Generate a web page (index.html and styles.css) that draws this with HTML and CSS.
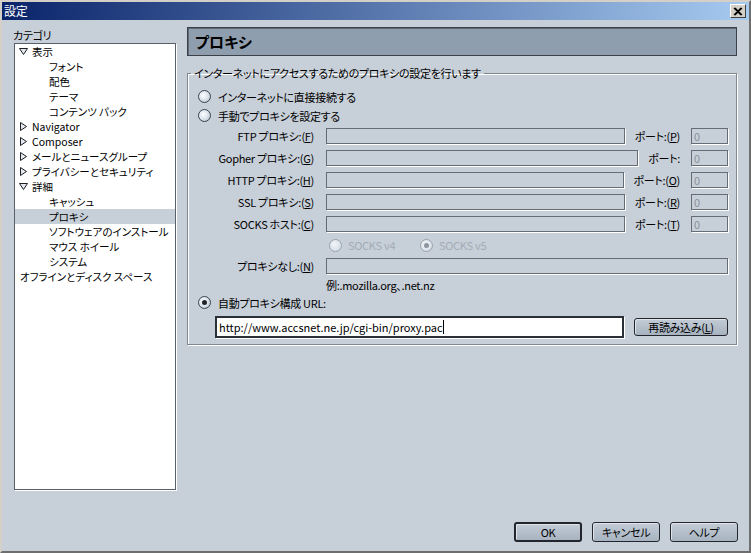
FILE: index.html
```html
<!DOCTYPE html>
<html lang="ja">
<head>
    <meta charset="UTF-8">
    <title>設定</title>
    <link rel="stylesheet" href="styles.css">
</head>
<body>
    <div class="window">
        <div class="titlebar">
            <span class="title">設定</span>
            <span class="close-btn">
                <svg width="10" height="9" viewBox="0 0 10 9"><path d="M1 1 L8 8 M2 1 L9 8 M8 1 L1 8 M9 1 L2 8" stroke="#000" stroke-width="1.2" fill="none"/></svg>
            </span>
        </div>

        <div class="content">
            <div class="sidebar">
                <div class="cat-label">カテゴリ</div>
                <ul class="tree">
                    <li class="lv1"><svg class="twisty" viewBox="0 0 9 9"><path d="M0.5 1.5 H8.5 L4.5 7.5 Z" fill="#e4e8ee" stroke="#1c1f24"/></svg>表示</li>
                    <li class="lv2">フォント</li>
                    <li class="lv2">配色</li>
                    <li class="lv2">テーマ</li>
                    <li class="lv2">コンテンツ パック</li>
                    <li class="lv1"><svg class="twisty" viewBox="0 0 9 9"><path d="M1.5 0.5 V8.5 L7.5 4.5 Z" fill="#e4e8ee" stroke="#1c1f24"/></svg>Navigator</li>
                    <li class="lv1"><svg class="twisty" viewBox="0 0 9 9"><path d="M1.5 0.5 V8.5 L7.5 4.5 Z" fill="#e4e8ee" stroke="#1c1f24"/></svg>Composer</li>
                    <li class="lv1"><svg class="twisty" viewBox="0 0 9 9"><path d="M1.5 0.5 V8.5 L7.5 4.5 Z" fill="#e4e8ee" stroke="#1c1f24"/></svg>メールとニュースグループ</li>
                    <li class="lv1"><svg class="twisty" viewBox="0 0 9 9"><path d="M1.5 0.5 V8.5 L7.5 4.5 Z" fill="#e4e8ee" stroke="#1c1f24"/></svg>プライバシーとセキュリティ</li>
                    <li class="lv1"><svg class="twisty" viewBox="0 0 9 9"><path d="M0.5 1.5 H8.5 L4.5 7.5 Z" fill="#e4e8ee" stroke="#1c1f24"/></svg>詳細</li>
                    <li class="lv2">キャッシュ</li>
                    <li class="lv2 selected">プロキシ</li>
                    <li class="lv2">ソフトウェアのインストール</li>
                    <li class="lv2">マウス ホイール</li>
                    <li class="lv2">システム</li>
                    <li class="lv0">オフラインとディスク スペース</li>
                </ul>
            </div>

            <div class="main">
                <div class="pane-title">プロキシ</div>

                <fieldset class="group">
                    <legend>インターネットにアクセスするためのプロキシの設定を行います</legend>

                    <div class="radio-row"><span class="radio"></span>インターネットに直接接続する</div>
                    <div class="radio-row"><span class="radio"></span>手動でプロキシを設定する</div>

                    <div class="proxy-row">
                        <span class="plabel">FTP プロキシ:(<u>F</u>)</span>
                        <span class="field"></span>
                        <span class="port-label">ポート:(<u>P</u>)</span>
                        <span class="port">0</span>
                    </div>
                    <div class="proxy-row">
                        <span class="plabel">Gopher プロキシ:(<u>G</u>)</span>
                        <span class="field"></span>
                        <span class="port-label">ポート:</span>
                        <span class="port">0</span>
                    </div>
                    <div class="proxy-row">
                        <span class="plabel">HTTP プロキシ:(<u>H</u>)</span>
                        <span class="field"></span>
                        <span class="port-label">ポート:(<u>O</u>)</span>
                        <span class="port">0</span>
                    </div>
                    <div class="proxy-row">
                        <span class="plabel">SSL プロキシ:(<u>S</u>)</span>
                        <span class="field"></span>
                        <span class="port-label">ポート:(<u>R</u>)</span>
                        <span class="port">0</span>
                    </div>
                    <div class="proxy-row">
                        <span class="plabel">SOCKS ホスト:(<u>C</u>)</span>
                        <span class="field"></span>
                        <span class="port-label">ポート:(<u>T</u>)</span>
                        <span class="port">0</span>
                    </div>

                    <div class="socks-row">
                        <span class="socks-opt"><span class="radio disabled"></span>SOCKS v4</span>
                        <span class="socks-opt"><span class="radio disabled checked"></span>SOCKS v5</span>
                    </div>

                    <div class="proxy-row noproxy">
                        <span class="plabel">プロキシなし:(<u>N</u>)</span>
                        <span class="field"></span>
                    </div>
                    <div class="example">例:.mozilla.org、.net.nz</div>

                    <div class="radio-row"><span class="radio checked"></span>自動プロキシ構成 URL:</div>

                    <div class="url-row">
                        <span class="url-field">http://www.accsnet.ne.jp/cgi-bin/proxy.pac<span class="caret"></span></span>
                        <button class="btn reload">再読み込み(<u>L</u>)</button>
                    </div>
                </fieldset>
            </div>
        </div>

        <div class="footer">
            <button class="btn default">OK</button>
            <button class="btn">キャンセル</button>
            <button class="btn">ヘルプ</button>
        </div>
    </div>
</body>
</html>
```

FILE: styles.css
```css
body {
    margin: 0;
    font-family: "Noto Sans CJK JP", sans-serif;
    font-size: 11px;
    letter-spacing: -0.3px;
    font-feature-settings: "palt";
    color: #000;
}
.window {
    width: 751px;
    height: 553px;
    box-sizing: border-box;
    display: flex;
    flex-direction: column;
    background: #c7cfd8;
    border-top: 2px solid #d4d0c8;
    border-left: 2px solid #d4d0c8;
    border-right: 2px solid #6e6e6e;
    border-bottom: 2px solid #6e6e6e;
}
.titlebar {
    height: 18px;
    display: flex;
    align-items: center;
    justify-content: space-between;
    padding: 0 3px 0 2px;
    background: linear-gradient(to right, #0a246a, #a6caf0);
}
.title {
    color: #fff;
    font-size: 12px;
    line-height: 18px;
}
.close-btn {
    width: 16px;
    height: 14px;
    box-sizing: border-box;
    display: flex;
    align-items: center;
    justify-content: center;
    background: #d4d0c8;
    border-top: 1px solid #fff;
    border-left: 1px solid #fff;
    border-right: 1px solid #404040;
    border-bottom: 1px solid #404040;
}
.content {
    display: flex;
    padding: 7px 0 0 11px;
}
.sidebar {
    width: 163px;
}
.cat-label {
    line-height: 16px;
}
.tree {
    list-style: none;
    margin: 0 0 0 1px;
    padding: 0;
    height: 447px;
    box-sizing: border-box;
    background: #fff;
    border: 1px solid #5a606b;
    box-shadow: 1px 1px 0 #fff;
    font-size: 10.5px;
    letter-spacing: 0;
}
.tree li {
    height: 15px;
    line-height: 15px;
    display: flex;
    align-items: center;
    white-space: nowrap;
}
.tree .lv0 { padding-left: 5px; }
.tree .lv1 { padding-left: 4px; }
.tree .lv2 { padding-left: 34px; }
.tree .selected { background: #c7cfd8; }
.twisty {
    width: 9px;
    height: 9px;
    margin-right: 4px;
}
.main {
    width: 550px;
    margin-left: 11px;
}
.pane-title {
    height: 29px;
    box-sizing: border-box;
    padding-left: 7px;
    display: flex;
    align-items: center;
    font-size: 15px;
    font-weight: bold;
    letter-spacing: 0;
    background: #8e9eae;
    border: 1px solid #3c4149;
    box-shadow: inset 1px 1px 0 #606975;
}
.group {
    margin: 10px 0 0 0;
    padding: 7px 8px 6px 10px;
    min-width: 0;
    height: 279px;
    box-sizing: border-box;
    border: 1px solid #7f8791;
    box-shadow: inset 1px 1px 0 #fff, 1px 1px 0 #fff;
}
.group legend {
    padding: 0 3px;
    margin-left: -7px;
    line-height: 14px;
}
.radio-row {
    height: 19px;
    display: flex;
    align-items: center;
}
.radio {
    width: 13px;
    height: 13px;
    box-sizing: border-box;
    border-radius: 50%;
    border: 1px solid #3a434e;
    background: radial-gradient(circle at 40% 40%, #fdfeff 0, #dfe6ee 45%, #a9b7c6 100%);
    margin-right: 7px;
    position: relative;
    flex-shrink: 0;
}
.radio.checked::after {
    content: "";
    position: absolute;
    left: 3px;
    top: 3px;
    width: 5px;
    height: 5px;
    border-radius: 50%;
    background: #1e232a;
}
.radio.disabled {
    border-color: #9aa3ad;
    background: radial-gradient(circle at 40% 40%, #f2f5f8 0, #dde3ea 60%, #c2cbd5 100%);
}
.radio.disabled.checked::after {
    background: #8d96a0;
}
.proxy-row {
    height: 22px;
    display: flex;
    align-items: center;
}
.plabel {
    width: 116px;
    text-align: right;
    margin-right: 12px;
    white-space: nowrap;
    flex-shrink: 0;
}
.field {
    flex: 1;
    height: 16px;
    box-sizing: border-box;
    border: 1px solid #656c76;
    box-shadow: 1px 1px 0 #fff;
}
.port-label {
    margin-left: 10px;
    white-space: nowrap;
}
.port {
    width: 37px;
    height: 16px;
    box-sizing: border-box;
    margin-left: 11px;
    padding-left: 2px;
    line-height: 14px;
    color: #8b939d;
    border: 1px solid #656c76;
    box-shadow: 1px 1px 0 #fff;
}
.socks-row {
    height: 20px;
    display: flex;
    align-items: center;
    padding-left: 131px;
    color: #a3abb5;
}
.socks-opt {
    display: flex;
    align-items: center;
    width: 91px;
}
.socks-opt .radio {
    margin-right: 6px;
}
.example {
    height: 16px;
    line-height: 16px;
    padding-left: 128px;
}
.url-row {
    display: flex;
    align-items: center;
    margin-top: 4px;
    padding-left: 17px;
}
.url-field {
    width: 409px;
    height: 22px;
    box-sizing: border-box;
    display: flex;
    align-items: center;
    padding-left: 2px;
    letter-spacing: 0;
    background: #fff;
    border: 2px solid #2b3038;
    box-shadow: 1px 1px 0 #fff;
}
.caret {
    width: 1px;
    height: 14px;
    background: #000;
}
.btn {
    font-family: "Noto Sans CJK JP", sans-serif;
    font-size: 11px;
    letter-spacing: -0.3px;
    font-feature-settings: "palt";
    height: 20px;
    padding: 0;
    color: #000;
    border: 1px solid #22262c;
    border-radius: 3px;
    background: linear-gradient(#c3ccd6, #a7b3c0);
    box-shadow: inset 1px 1px 0 #dfe5eb;
}
.reload {
    width: 94px;
    height: 18px;
    margin-left: 10px;
    line-height: 14px;
}
.footer {
    margin-top: auto;
    display: flex;
    justify-content: flex-end;
    gap: 10px;
    padding: 0 11px 9px 0;
}
.footer .btn {
    width: 68px;
}
.btn.default {
    border-width: 2px;
}
```
